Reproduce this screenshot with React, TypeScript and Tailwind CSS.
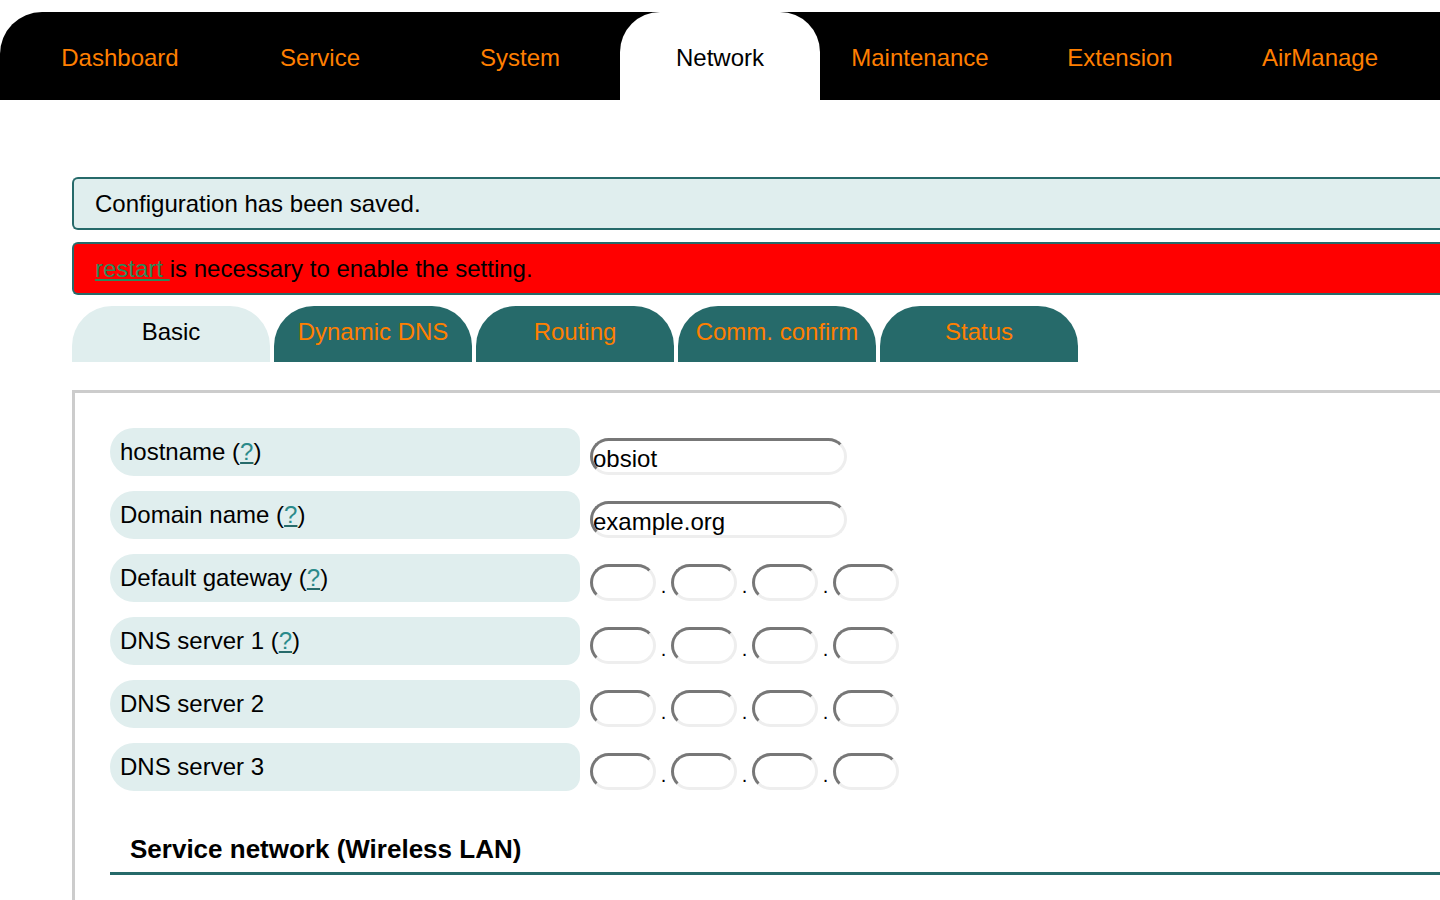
import React from "react";

const font = { fontFamily: '"Liberation Sans", Arial, Helvetica, sans-serif' };

const mainTabs = ["Dashboard", "Service", "System", "Network", "Maintenance", "Extension", "AirManage"];
const subTabs = ["Basic", "Dynamic DNS", "Routing", "Comm. confirm", "Status"];

function HelpMark() {
  return (
    <>
      {" "}(<span className="text-[#2a8a8a] underline decoration-[#266a6a] underline-offset-2">?</span>)
    </>
  );
}

function TextBox({ value }: { value: string }) {
  return (
    <input
      readOnly
      value={value}
      className="mt-[10px] h-[37px] w-[257px] rounded-full border-[3px] border-t-[#777] border-l-[#777] border-b-[#eee] border-r-[#eee] bg-white px-0 pt-[4px] text-[24px] leading-none text-black outline-none"
      style={font}
    />
  );
}

function IpBox() {
  return (
    <div className="mt-[10px] flex items-end">
      {[0, 1, 2, 3].map((i) => (
        <React.Fragment key={i}>
          {i > 0 && <span className="mb-[4px] w-[15px] text-center text-[20px] leading-[22px]">.</span>}
          <input
            readOnly
            className="h-[37px] w-[66px] rounded-full border-[3px] border-t-[#777] border-l-[#777] border-b-[#eee] border-r-[#eee] bg-white outline-none"
          />
        </React.Fragment>
      ))}
    </div>
  );
}

const rows: { label: string; help: boolean; field: React.ReactNode }[] = [
  { label: "hostname", help: true, field: <TextBox value="obsiot" /> },
  { label: "Domain name", help: true, field: <TextBox value="example.org" /> },
  { label: "Default gateway", help: true, field: <IpBox /> },
  { label: "DNS server 1", help: true, field: <IpBox /> },
  { label: "DNS server 2", help: false, field: <IpBox /> },
  { label: "DNS server 3", help: false, field: <IpBox /> },
];

export default function App() {
  return (
    <div className="h-[900px] w-[1440px] overflow-hidden bg-white text-black" style={font}>
      {/* top menu */}
      <div className="mt-[12px] flex h-[88px] rounded-tl-[42px] bg-black pl-[20px]">
        {mainTabs.map((t) => (
          <div
            key={t}
            className={
              t === "Network"
                ? "flex w-[200px] items-center justify-center rounded-t-[40px] bg-white pt-[3px] text-[24px] text-black"
                : "flex w-[200px] items-center justify-center pt-[3px] text-[24px] text-[#ff7f00]"
            }
          >
            {t}
          </div>
        ))}
      </div>

      <div className="ml-[72px] pt-[77px]">
        {/* messages */}
        <div className="flex h-[53px] items-center rounded-l-[6px] border-2 border-r-0 border-[#266a6a] bg-[#e0eeee] pl-[21px] text-[24px]">
          Configuration has been saved.
        </div>
        <div className="mt-[12px] flex h-[53px] items-center rounded-l-[6px] border-2 border-r-0 border-[#266a6a] bg-[#ff0000] pl-[21px] text-[24px]">
          <span className="text-[#2a8a5a] underline decoration-[#2a8a5a]">restart&nbsp;</span>
          is necessary to enable the setting.
        </div>

        {/* sub tabs */}
        <div className="mt-[11px] flex gap-[4px]">
          {subTabs.map((t) => (
            <div
              key={t}
              className={
                t === "Basic"
                  ? "flex h-[56px] w-[198px] justify-center rounded-t-[40px] bg-[#e0eeee] pt-[12px] text-[24px] leading-[28px] text-black"
                  : "flex h-[56px] w-[198px] justify-center rounded-t-[40px] bg-[#266a6a] pt-[12px] text-[24px] leading-[28px] text-[#ff7f00]"
              }
            >
              {t}
            </div>
          ))}
        </div>

        {/* panel */}
        <div className="mt-[28px] h-[600px] border-l-[3px] border-t-[3px] border-[#cccccc] pl-[35px] pt-[35px]">
          <div className="flex flex-col gap-[15px]">
            {rows.map((r) => (
              <div key={r.label} className="flex items-start gap-[10px]">
                <div className="flex h-[48px] w-[470px] items-center rounded-l-[24px] rounded-r-[14px] bg-[#e0eeee] pl-[10px] text-[24px]">
                  {r.label}
                  {r.help && <HelpMark />}
                </div>
                {r.field}
              </div>
            ))}
          </div>

          <div className="mt-[43px] border-b-[3px] border-[#266a6a] pb-[8px] pl-[20px] text-[26px] font-bold leading-[30px]">
            Service network (Wireless LAN)
          </div>
        </div>
      </div>
    </div>
  );
}
